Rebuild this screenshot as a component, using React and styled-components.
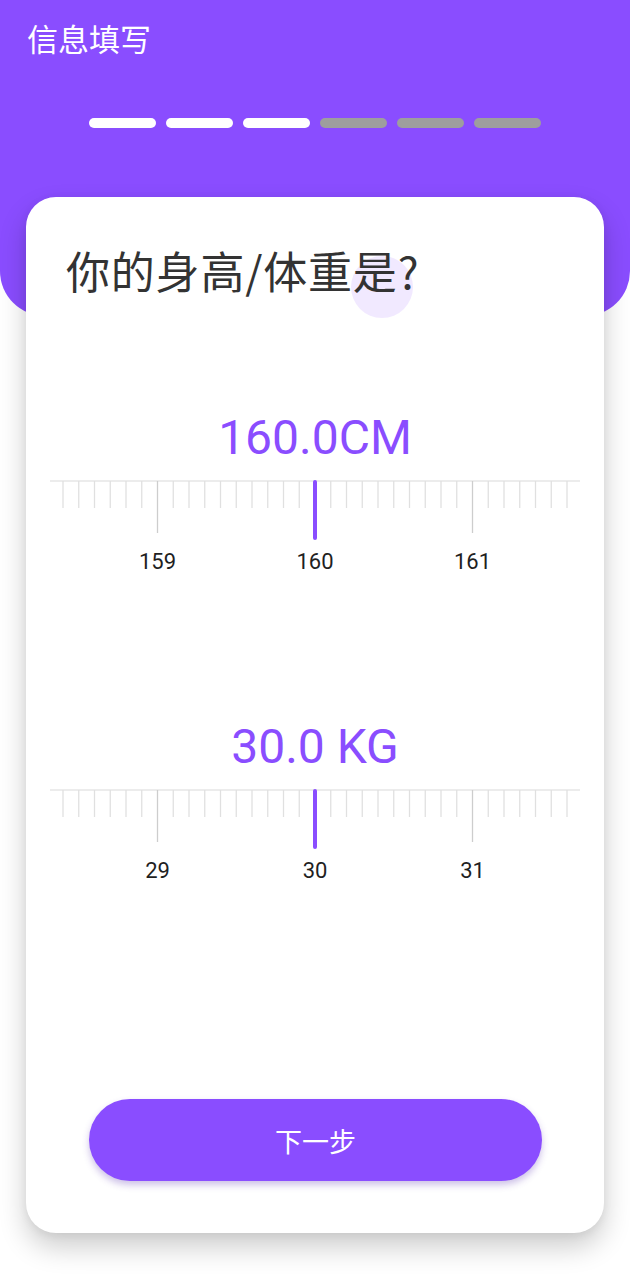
import React from "react";
import styled, { createGlobalStyle } from "styled-components";

const PURPLE = "#8a4dff";

const GlobalStyle = createGlobalStyle`
  html, body { margin: 0; padding: 0; background: #ffffff; }
  body { font-family: Roboto, "Noto Sans CJK SC", sans-serif; }
  * { box-sizing: border-box; }
`;

const Page = styled.div`
  width: 630px;
  min-height: 1280px;
  background: #ffffff;
  overflow: hidden;
`;

const Header = styled.header`
  height: 316px;
  background: ${PURPLE};
  border-bottom-left-radius: 45px;
  border-bottom-right-radius: 45px;
  padding: 20px 0 0 27px;
`;

const Title = styled.h1`
  margin: 0;
  font-family: "Noto Sans CJK SC", sans-serif;
  font-weight: 400;
  font-size: 31px;
  line-height: 36px;
  color: #ffffff;
`;

const Steps = styled.div`
  display: flex;
  gap: 10px;
  margin: 62px 0 0 62px;
`;

const Step = styled.span`
  width: 67px;
  height: 10px;
  border-radius: 5px;
  background: ${(p) => (p.$done ? "#ffffff" : "#9e9e9e")};
`;

const Card = styled.main`
  position: relative;
  margin: -119px 26px 0;
  height: 1036px;
  background: #ffffff;
  border-radius: 30px;
  box-shadow: 0 14px 28px rgba(0, 0, 0, 0.2), 0 2px 10px rgba(0, 0, 0, 0.06);
  padding: 47px 0 0 40px;
  display: flex;
  flex-direction: column;
`;

const Ripple = styled.span`
  position: absolute;
  left: 325px;
  top: 59px;
  width: 62px;
  height: 62px;
  border-radius: 50%;
  background: rgba(138, 77, 255, 0.12);
`;

const Question = styled.h2`
  position: relative;
  margin: 0;
  font-family: "Noto Sans CJK SC", sans-serif;
  font-weight: 400;
  font-size: 44px;
  letter-spacing: 0.8px;
  line-height: 53px;
  color: #333333;
`;

const Measure = styled.section`
  margin: ${(p) => p.$top}px 0 0 -16px;
  width: 530px;
  display: flex;
  flex-direction: column;
  align-items: center;
`;

const Value = styled.div`
  font-family: Roboto, sans-serif;
  font-size: 48px;
  line-height: 56px;
  color: ${PURPLE};
  text-align: center;
`;

const RulerSvg = styled.svg`
  display: block;
  margin-top: 14px;
`;

const Labels = styled.div`
  display: flex;
  justify-content: center;
  margin-top: 7px;
`;

const Label = styled.span`
  width: 157.5px;
  text-align: center;
  font-family: Roboto, sans-serif;
  font-size: 22px;
  line-height: 26px;
  color: #1f1f1f;
`;

const NextButton = styled.button`
  margin: 215px 0 0 23px;
  width: 453px;
  height: 82px;
  border: none;
  border-radius: 41px;
  background: ${PURPLE};
  color: #ffffff;
  font-family: "Noto Sans CJK SC", sans-serif;
  font-size: 27px;
  box-shadow: 0 4px 7px rgba(90, 50, 180, 0.3);
`;

const SPACING = 15.75;

function Ruler() {
  const ticks = [];
  for (let i = -16; i <= 16; i++) {
    const x = 265 + i * SPACING;
    const major = i % 10 === 0;
    if (i === 0) continue;
    ticks.push(
      <line
        key={i}
        x1={x}
        x2={x}
        y1={1}
        y2={major ? 53 : 28}
        stroke={major ? "#cdcdcd" : "#e0e0e0"}
        strokeWidth={1.3}
      />
    );
  }
  return (
    <RulerSvg width="530" height="62" viewBox="0 0 530 62">
      <line x1="0" x2="530" y1="1" y2="1" stroke="#e6e6e6" strokeWidth="1.5" />
      {ticks}
      <line x1="265" x2="265" y1="2" y2="58" stroke={PURPLE} strokeWidth="4" strokeLinecap="round" />
    </RulerSvg>
  );
}

function MeasureBlock({ top, value, labels }) {
  return (
    <Measure $top={top}>
      <Value>{value}</Value>
      <Ruler />
      <Labels>
        {labels.map((l) => (
          <Label key={l}>{l}</Label>
        ))}
      </Labels>
    </Measure>
  );
}

export default function App() {
  return (
    <Page>
      <GlobalStyle />
      <Header>
        <Title>信息填写</Title>
        <Steps>
          {[0, 1, 2, 3, 4, 5].map((i) => (
            <Step key={i} $done={i < 3} />
          ))}
        </Steps>
      </Header>
      <Card>
        <Ripple />
        <Question>你的身高/体重是?</Question>
        <MeasureBlock top={113} value="160.0CM" labels={["159", "160", "161"]} />
        <MeasureBlock top={144} value="30.0 KG" labels={["29", "30", "31"]} />
        <NextButton>下一步</NextButton>
      </Card>
    </Page>
  );
}
